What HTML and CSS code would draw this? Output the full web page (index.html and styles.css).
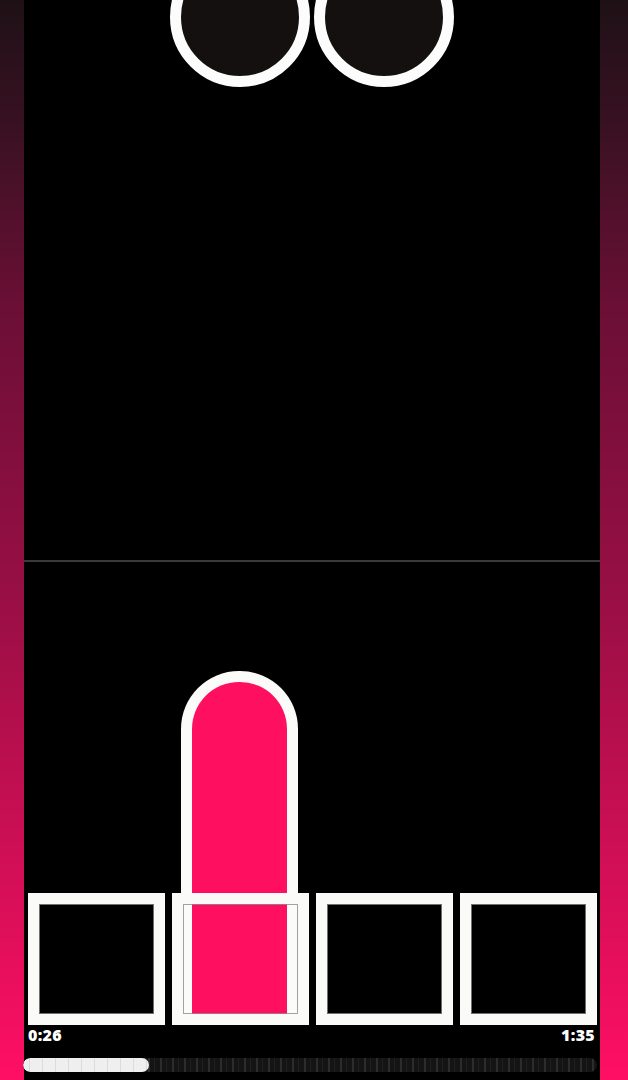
FILE: index.html
```html
<!DOCTYPE html>
<html>
<head>
<meta charset="utf-8">
<link rel="stylesheet" href="styles.css">
</head>
<body>
<div class="frame">
  <div class="side side-left"></div>
  <main class="stage">
    <section class="upper">
      <div class="eyes">
        <div class="eye"></div>
        <div class="eye"></div>
      </div>
    </section>
    <div class="divider"></div>
    <section class="lower">
      <div class="lane-area">
        <div class="note"></div>
        <div class="keys">
          <div class="key"></div>
          <div class="key"></div>
          <div class="key"></div>
          <div class="key"></div>
        </div>
      </div>
      <div class="times">
        <span class="time">0:26</span>
        <span class="time">1:35</span>
      </div>
      <div class="progress">
        <div class="progress-fill" style="width: 22%"></div>
      </div>
    </section>
  </main>
  <div class="side side-right"></div>
</div>
</body>
</html>
```
FILE: styles.css
```css
html, body {
  margin: 0;
  padding: 0;
}
body {
  width: 628px;
  height: 1080px;
  overflow: hidden;
  background: linear-gradient(to bottom, #1e1116 0%, #3a1122 12%, #6a0f35 28%, #9a0f45 56%, #d80f58 83%, #ff0f64 100%);
  font-family: "Open Sans", "Liberation Sans", sans-serif;
}
.frame {
  display: flex;
  height: 1080px;
}
.side-left { width: 24px; flex: none; }
.side-right { width: 28px; flex: none; }
.stage {
  width: 576px;
  flex: none;
  background: #000;
  display: flex;
  flex-direction: column;
}
.upper {
  height: 560px;
  overflow: hidden;
}
.eyes {
  display: flex;
  justify-content: center;
  gap: 4px;
  margin-top: -53px;
}
.eye {
  width: 118px;
  height: 118px;
  border: 11px solid #fcfcfc;
  border-radius: 50%;
  background: #141010;
}
.divider {
  height: 2px;
  background: #3a3a3a;
}
.lower {
  height: 518px;
  display: flex;
  flex-direction: column;
}
.lane-area {
  position: relative;
  padding: 331px 3px 0 4px;
}
.note {
  position: absolute;
  left: 157px;
  top: 109px;
  width: 95px;
  height: 340px;
  border: 11px solid #fbfbf9;
  border-bottom: none;
  border-radius: 58px 58px 0 0;
  background: #fe0f60;
}
.keys {
  position: relative;
  display: grid;
  grid-template-columns: repeat(4, 137px);
  gap: 7px;
}
.key {
  height: 110px;
  border: 11px solid #fafaf8;
  box-shadow: inset 0 0 0 1px rgba(140,140,140,0.8);
}
.times {
  display: flex;
  justify-content: space-between;
  padding: 0 5px 0 4px;
  height: 20px;
  line-height: 20px;
  font-size: 16px;
  font-weight: 800;
  letter-spacing: 0.3px;
  color: #fff;
}
.progress {
  margin: 13px 3px 0 -1px;
  height: 14px;
  border-radius: 7px;
  overflow: hidden;
  background:
    repeating-linear-gradient(to right, transparent 0 5px, rgba(60,60,60,0.6) 5px 7px, transparent 7px 11px, rgba(45,45,45,0.5) 11px 12px),
    #141414;
}
.progress-fill {
  height: 100%;
  border-radius: 7px;
  background:
    repeating-linear-gradient(to right, transparent 0 6px, rgba(200,200,200,0.5) 6px 7px, transparent 7px 13px),
    #efefef;
}
```
